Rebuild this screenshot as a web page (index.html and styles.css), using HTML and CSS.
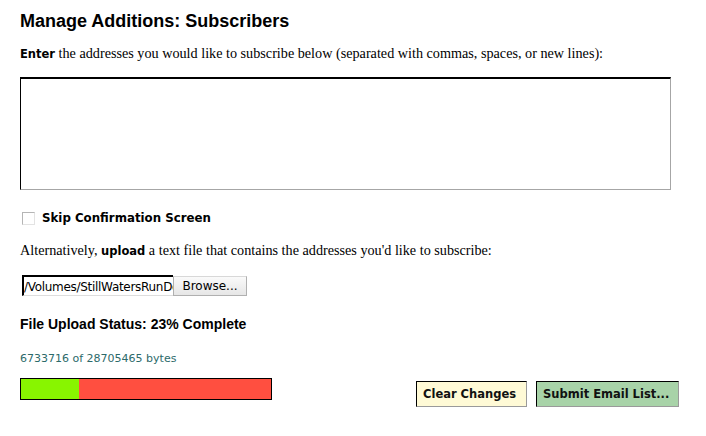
FILE: index.html
```html
<!DOCTYPE html>
<html>
<head>
	<meta charset="utf-8">
	<title>Manage Additions: Subscribers</title>
	<link rel="stylesheet" href="styles.css">
</head>
<body>
<div class="content">
	<h1>Manage Additions: Subscribers</h1>
	<p class="intro"><b>Enter</b> the addresses you would like to subscribe below (separated with commas, spaces, or new lines):</p>
	<textarea class="addr"></textarea>
	<div class="skip">
		<span class="box"></span><b>Skip Confirmation Screen</b>
	</div>
	<p class="intro alt">Alternatively, <b>upload</b> a text file that contains the addresses you'd like to subscribe:</p>
	<div class="file">
		<input class="path" type="text" value="/Volumes/StillWatersRunDeep/list.txt" readonly><span class="browse">Browse...</span>
	</div>
	<h2>File Upload Status: 23% Complete</h2>
	<p class="bytes">6733716 of 28705465 bytes</p>
	<div class="footer">
		<div class="bar"><div class="done" style="width: 23%"></div></div>
		<div class="actions">
			<span class="btn clear">Clear Changes</span>
			<span class="btn submit">Submit Email List...</span>
		</div>
	</div>
</div>
</body>
</html>
```

FILE: styles.css
```css
body {
	margin: 0;
	padding: 0;
	background: #fff;
	color: #000;
}

.content {
	padding: 10px 20px 0 20px;
	width: 666px;
}

h1 {
	font-family: "Liberation Sans", Arial, sans-serif;
	font-size: 18px;
	font-weight: bold;
	margin: 0;
	line-height: 22px;
}

.intro {
	font-family: "Liberation Serif", Georgia, serif;
	font-size: 14.2px;
	margin: 13px 0 0 0;
	line-height: 16px;
}

.intro b {
	font-family: "DejaVu Sans", Verdana, sans-serif;
	font-size: 11.5px;
}

.addr {
	display: block;
	box-sizing: border-box;
	width: 651px;
	height: 113px;
	margin: 15px 0 0 0;
	padding: 0;
	border: 1px solid #a6a6a6;
	border-top: 2px solid #000;
	border-left: 1px solid #000;
	resize: none;
}

.skip {
	display: flex;
	align-items: center;
	margin: 20px 0 0 2px;
	font-family: "DejaVu Sans", Verdana, sans-serif;
	font-size: 11.8px;
	line-height: 16px;
}

.box {
	width: 11px;
	height: 11px;
	border: 1px solid #b5b5b5;
	border-right-color: #e3e3e3;
	border-bottom-color: #e3e3e3;
	margin-right: 7px;
}

.alt {
	margin-top: 16px;
}

.file {
	display: flex;
	margin: 16px 0 0 2px;
	font-family: "DejaVu Sans", Verdana, sans-serif;
	font-size: 12px;
	height: 21px;
}

.path {
	box-sizing: border-box;
	width: 151px;
	height: 21px;
	margin: 0;
	font-family: "DejaVu Sans", Verdana, sans-serif;
	font-size: 12px;
	color: #000;
	border: 0;
	border-top: 2px solid #000;
	border-left: 2px solid #000;
	border-bottom: 1px solid #ddd;
	padding: 1px 0 0 0;
	line-height: 17px;
	letter-spacing: -0.3px;
	outline: none;
	background: #fff;
}

.browse {
	box-sizing: border-box;
	width: 74px;
	text-align: center;
	line-height: 18px;
	background: linear-gradient(#fafafa, #e6e6e6);
	border: 1px solid #b0b0b0;
	border-top-color: #d8d8d8;
	height: 20px;
	margin-top: 1px;
}

h2 {
	font-family: "Liberation Sans", Arial, sans-serif;
	font-size: 14px;
	font-weight: bold;
	margin: 19px 0 0 0;
	line-height: 18px;
}

.bytes {
	font-family: "DejaVu Sans", Verdana, sans-serif;
	font-size: 11px;
	color: #2c6a6a;
	margin: 19px 0 0 0;
	line-height: 14px;
}

.footer {
	display: flex;
	align-items: flex-start;
	margin-top: 12px;
}

.bar {
	box-sizing: border-box;
	width: 252px;
	height: 22px;
	border: 1px solid #000;
	background: #ff4f40;
}

.done {
	height: 100%;
	background: #88f500;
}

.actions {
	display: flex;
	gap: 9px;
	margin: 3px 0 0 144px;
}

.btn {
	box-sizing: border-box;
	height: 26px;
	line-height: 24px;
	padding: 0 6px;
	font-family: "DejaVu Sans", Verdana, sans-serif;
	font-size: 11.5px;
	font-weight: bold;
	color: #111;
	border: 1px solid #9a9a9a;
	border-top-color: #000;
	border-left-color: #000;
}

.clear {
	width: 111px;
	background: #fffad6;
}

.submit {
	width: 143px;
	background: #a8d3a8;
}
```
